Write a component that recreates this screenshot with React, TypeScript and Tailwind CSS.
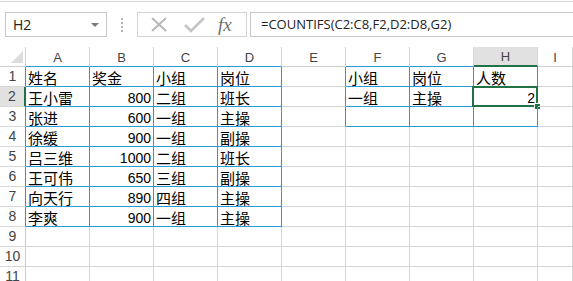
import React from "react";

const cols = ["A", "B", "C", "D", "E", "F", "G", "H", "I"];

type Cell = { v: string; num?: boolean };

const data: Record<number, Record<string, Cell>> = {
  1: { A: { v: "姓名" }, B: { v: "奖金" }, C: { v: "小组" }, D: { v: "岗位" }, F: { v: "小组" }, G: { v: "岗位" }, H: { v: "人数" } },
  2: { A: { v: "王小雷" }, B: { v: "800", num: true }, C: { v: "二组" }, D: { v: "班长" }, F: { v: "一组" }, G: { v: "主操" }, H: { v: "2", num: true } },
  3: { A: { v: "张进" }, B: { v: "600", num: true }, C: { v: "一组" }, D: { v: "主操" } },
  4: { A: { v: "徐缓" }, B: { v: "900", num: true }, C: { v: "一组" }, D: { v: "副操" } },
  5: { A: { v: "吕三维" }, B: { v: "1000", num: true }, C: { v: "二组" }, D: { v: "班长" } },
  6: { A: { v: "王可伟" }, B: { v: "650", num: true }, C: { v: "三组" }, D: { v: "副操" } },
  7: { A: { v: "向天行" }, B: { v: "890", num: true }, C: { v: "四组" }, D: { v: "主操" } },
  8: { A: { v: "李爽" }, B: { v: "900", num: true }, C: { v: "一组" }, D: { v: "主操" } },
};

// c: 1..9 for A..I, r: 1..11
function isBlue(r: number, c: number) {
  if (r >= 1 && r <= 8 && c >= 1 && c <= 4) return true;
  if (r >= 1 && r <= 3 && c >= 6 && c <= 8) return true;
  return false;
}

function FormulaBar() {
  return (
    <div className="h-[46px] border-t border-[#d6d6d6] mt-px flex items-start pt-[10px] pl-[5px] bg-white">
      {/* name box */}
      <div className="w-[102px] h-[25px] border border-[#c6c6c6] flex items-center justify-between pl-[7px] pr-[7px]">
        <span className="text-[14px] text-[#222] font-['Open_Sans',sans-serif]">H2</span>
        <span className="w-0 h-0 border-l-[4px] border-r-[4px] border-t-[4px] border-l-transparent border-r-transparent border-t-[#7a7a7a]" />
      </div>
      <div className="w-[30px] h-[25px] flex flex-col items-center justify-center gap-[2px]">
        <span className="w-[2px] h-[2px] bg-[#b5b5b5]" />
        <span className="w-[2px] h-[2px] bg-[#b5b5b5]" />
        <span className="w-[2px] h-[2px] bg-[#b5b5b5]" />
        <span className="w-[2px] h-[2px] bg-[#b5b5b5]" />
      </div>
      {/* buttons */}
      <div className="w-[110px] h-[25px] border border-[#d4d4d4] flex items-center">
        <svg width="40" height="23" viewBox="0 0 40 23" className="ml-[2px]">
          <path d="M12 5 L26 18 M26 5 L12 18" stroke="#b8b8b8" strokeWidth="2" fill="none" />
        </svg>
        <svg width="34" height="23" viewBox="0 0 34 23">
          <path d="M5 12 L11 18 L24 5" stroke="#c4c4c4" strokeWidth="2.6" fill="none" />
        </svg>
        <span className="ml-[4px] text-[19px] italic text-[#6f6f6f] font-['Liberation_Serif',serif] leading-none">fx</span>
      </div>
      <div className="ml-[3px] flex-1 h-[25px] border border-[#c6c6c6] border-r-0 flex items-center pl-[10px]">
        <span className="text-[13px] text-[#222] font-['Open_Sans',sans-serif]">=COUNTIFS(C2:C8,F2,D2:D8,G2)</span>
      </div>
    </div>
  );
}

function HeaderRow() {
  return (
    <>
      <div className="h-[20px] border-r border-b border-[#d0d0d0] bg-white flex items-end justify-end pr-[2px] pb-[3px]">
        <svg width="12" height="12" viewBox="0 0 12 12">
          <path d="M12 0 L12 12 L0 12 Z" fill="#dcdcdc" />
        </svg>
      </div>
      {cols.map((c, i) => {
        const sel = c === "H";
        const belowBlue = isBlue(1, i + 1);
        return (
          <div
            key={c}
            className={
              "h-[20px] flex items-center justify-center pt-[2px] text-[13px] text-[#444] font-['Liberation_Sans',sans-serif] border-r border-r-[#d6d6d6] " +
              (sel
                ? "bg-[#e1e1e1] border-b-2 border-b-[#217346]"
                : belowBlue
                ? "bg-white border-b border-b-[#2a9ad6]"
                : "bg-white border-b border-b-[#d0d0d0]")
            }
          >
            {c}
          </div>
        );
      })}
    </>
  );
}

function Row({ r }: { r: number }) {
  const row = data[r] || {};
  const selRow = r === 2;
  return (
    <>
      <div
        className={
          "h-[20px] flex items-center justify-center text-[14px] text-[#444] font-['Liberation_Sans',sans-serif] border-b border-b-[#d6d6d6] " +
          (selRow
            ? "bg-[#e1e1e1] border-r-2 border-r-[#217346]"
            : isBlue(r, 1)
            ? "bg-white border-r border-r-[#2a9ad6]"
            : "bg-white border-r border-r-[#c8c8c8]")
        }
      >
        {r}
      </div>
      {cols.map((c, i) => {
        const ci = i + 1;
        const cell = row[c];
        const rightBlue = isBlue(r, ci) || isBlue(r, ci + 1);
        const bottomBlue = isBlue(r, ci) || isBlue(r + 1, ci);
        const selected = r === 2 && c === "H";
        return (
          <div
            key={c}
            className={
              "relative h-[20px] flex items-center whitespace-nowrap overflow-visible text-black " +
              (rightBlue ? "border-r border-r-[#2a9ad6] " : "border-r border-r-[#d4d4d4] ") +
              (bottomBlue ? "border-b border-b-[#2a9ad6] " : "border-b border-b-[#d4d4d4] ") +
              (cell?.num
                ? "justify-end pr-[2px] text-[14px] font-['Liberation_Sans',sans-serif]"
                : "justify-start pl-[2px] text-[15px] font-['Noto_Sans_CJK_SC',sans-serif]")
            }
          >
            {cell && <span className="leading-none pt-[2px]">{cell.v}</span>}
            {selected && (
              <>
                <span className="absolute -left-[2px] -top-[1px] -right-[1px] -bottom-[1px] border-2 border-[#217346] pointer-events-none" />
                <span className="absolute -right-[4px] -bottom-[4px] w-[7px] h-[7px] bg-[#217346] border border-white" />
              </>
            )}
          </div>
        );
      })}
    </>
  );
}

export default function App() {
  return (
    <div className="w-[573px] h-[281px] overflow-hidden bg-white">
      <FormulaBar />
      <div className="grid grid-cols-[26px_repeat(8,64px)_1fr]">
        <HeaderRow />
        {Array.from({ length: 11 }, (_, i) => (
          <Row key={i + 1} r={i + 1} />
        ))}
      </div>
    </div>
  );
}
